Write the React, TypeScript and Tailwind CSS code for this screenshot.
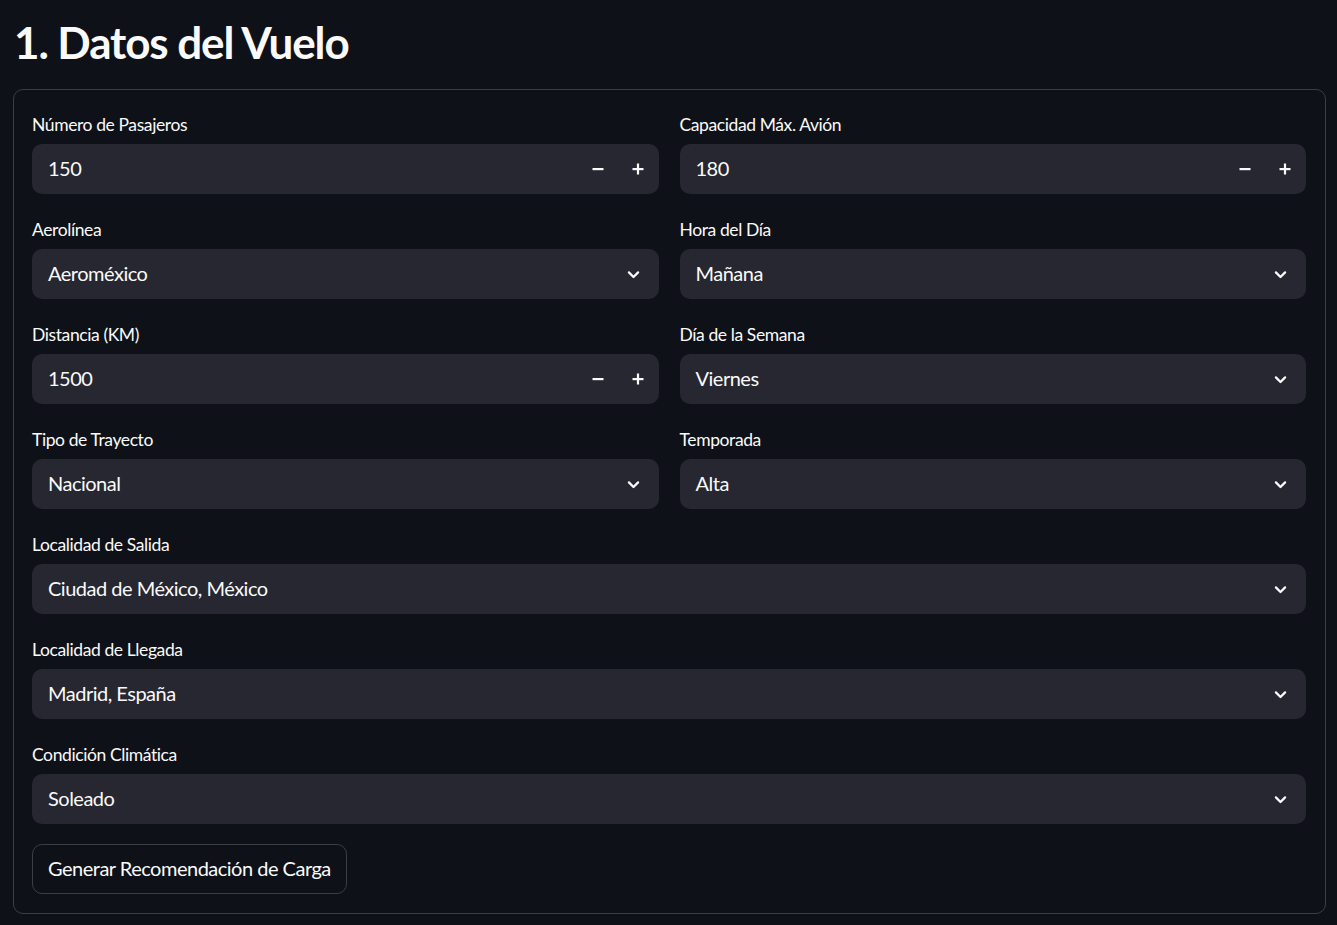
import React from 'react';

const Chevron = () => (
  <svg className="w-[17px] h-[17px]" viewBox="0 0 24 24" fill="none" stroke="currentColor" strokeWidth={3.2} strokeLinecap="round" strokeLinejoin="round">
    <path d="M5.5 9l6.5 6.5 6.5-6.5" />
  </svg>
);

const Minus = () => (
  <svg className="w-[12px] h-[12px]" viewBox="0 0 12 12" fill="currentColor">
    <rect x="0.5" y="5" width="11" height="2.2" />
  </svg>
);

const Plus = () => (
  <svg className="w-[12px] h-[12px]" viewBox="0 0 12 12" fill="currentColor">
    <rect x="0.5" y="5" width="11" height="2.2" />
    <rect x="4.9" y="0.5" width="2.2" height="11" />
  </svg>
);

function Label({ text }: { text: string }) {
  return <div className="text-[17.5px] leading-[25px] tracking-[-0.4px] text-[#fafafa] pb-[7px]">{text}</div>;
}

function NumberField({ label, value }: { label: string; value: string }) {
  return (
    <div className="flex flex-col">
      <Label text={label} />
      <div className="flex items-center h-[50px] rounded-[10px] bg-[#262730]">
        <span className="flex-1 pl-[16px] pb-[2px] text-[20px] tracking-[-0.5px] text-[#fafafa]">{value}</span>
        <button className="w-[40px] h-full flex items-center justify-center text-[#fafafa]">
          <Minus />
        </button>
        <button className="w-[40px] h-full flex items-center justify-center text-[#fafafa] mr-[1px]">
          <Plus />
        </button>
      </div>
    </div>
  );
}

function SelectField({ label, value }: { label: string; value: string }) {
  return (
    <div className="flex flex-col">
      <Label text={label} />
      <div className="flex items-center h-[50px] rounded-[10px] bg-[#262730] pl-[16px] pr-[17px]">
        <span className="flex-1 pb-[2px] text-[20px] tracking-[-0.5px] text-[#fafafa]">{value}</span>
        <span className="text-[#fafafa]">
          <Chevron />
        </span>
      </div>
    </div>
  );
}

export default function App() {
  return (
    <div
      className="min-h-[925px] bg-[#0e1117] text-[#fafafa] pl-[13px] pr-[11px] pt-[14px]"
      style={{ fontFamily: 'Lato, "Noto Sans", sans-serif' }}
    >
      <h1 className="text-[44px] font-bold leading-[56px] tracking-[-1.1px] pl-[1px] mb-[19px]">1. Datos del Vuelo</h1>
      <div className="border border-[#3b3e45] rounded-[10px] pl-[18px] pr-[19px] pt-[22px] pb-[19px]">
        <div className="grid grid-cols-2 gap-x-[21px] gap-y-[23px]">
          <NumberField label="Número de Pasajeros" value="150" />
          <NumberField label="Capacidad Máx. Avión" value="180" />
          <SelectField label="Aerolínea" value="Aeroméxico" />
          <SelectField label="Hora del Día" value="Mañana" />
          <NumberField label="Distancia (KM)" value="1500" />
          <SelectField label="Día de la Semana" value="Viernes" />
          <SelectField label="Tipo de Trayecto" value="Nacional" />
          <SelectField label="Temporada" value="Alta" />
        </div>
        <div className="flex flex-col gap-y-[23px] mt-[23px]">
          <SelectField label="Localidad de Salida" value="Ciudad de México, México" />
          <SelectField label="Localidad de Llegada" value="Madrid, España" />
          <SelectField label="Condición Climática" value="Soleado" />
        </div>
        <button className="mt-[20px] h-[50px] px-[15px] pb-[2px] rounded-[10px] border border-[#3b3e45] bg-[#0e1117] text-[20px] tracking-[-0.5px] text-[#fafafa]">
          Generar Recomendación de Carga
        </button>
      </div>
    </div>
  );
}
